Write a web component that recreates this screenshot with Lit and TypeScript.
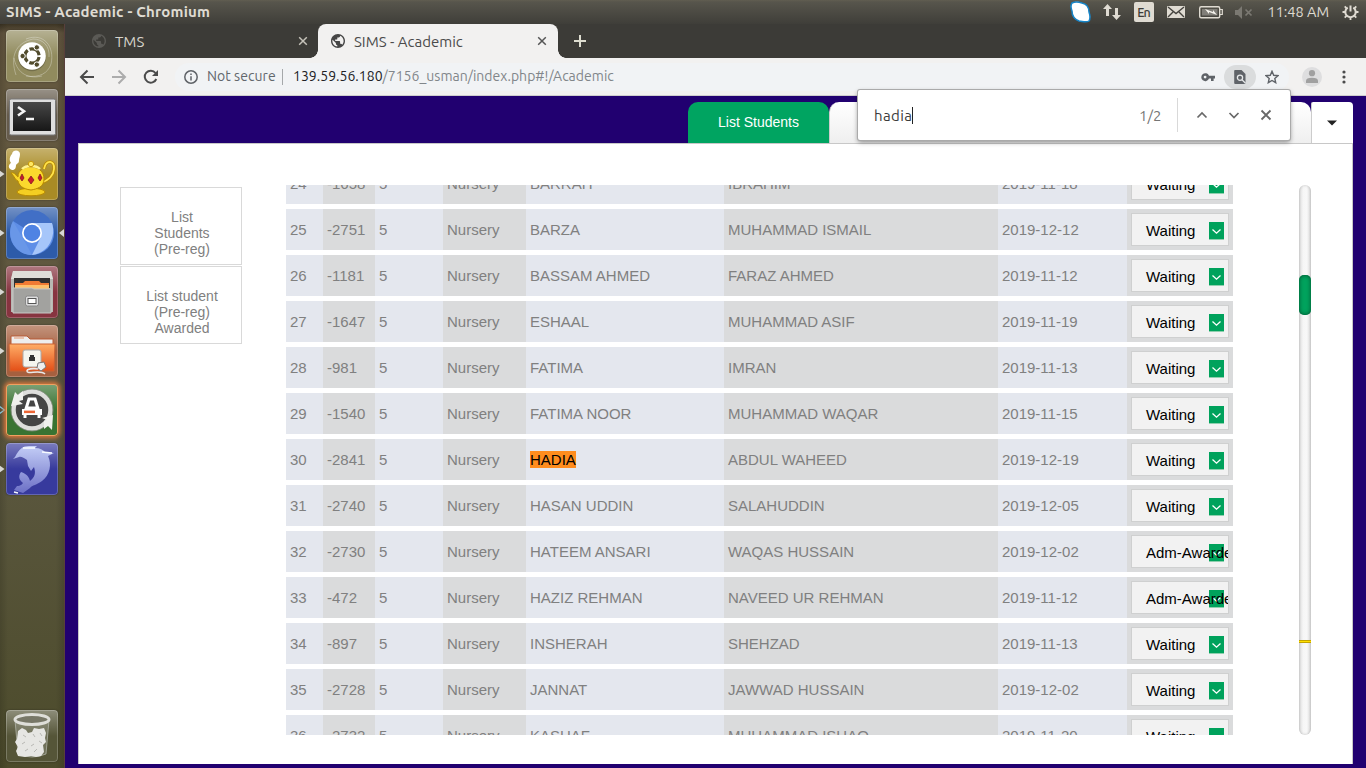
import { LitElement, html, css, svg } from "lit";
import { customElement, property } from "lit/decorators.js";

type Student = [number, string, string, string, string, string];

const students: Student[] = [
  [24, "-1658", "BARRAH", "IBRAHIM", "2019-11-18", "Waiting"],
  [25, "-2751", "BARZA", "MUHAMMAD ISMAIL", "2019-12-12", "Waiting"],
  [26, "-1181", "BASSAM AHMED", "FARAZ AHMED", "2019-11-12", "Waiting"],
  [27, "-1647", "ESHAAL", "MUHAMMAD ASIF", "2019-11-19", "Waiting"],
  [28, "-981", "FATIMA", "IMRAN", "2019-11-13", "Waiting"],
  [29, "-1540", "FATIMA NOOR", "MUHAMMAD WAQAR", "2019-11-15", "Waiting"],
  [30, "-2841", "HADIA", "ABDUL WAHEED", "2019-12-19", "Waiting"],
  [31, "-2740", "HASAN UDDIN", "SALAHUDDIN", "2019-12-05", "Waiting"],
  [32, "-2730", "HATEEM ANSARI", "WAQAS HUSSAIN", "2019-12-02", "Adm-Awarded"],
  [33, "-472", "HAZIZ REHMAN", "NAVEED UR REHMAN", "2019-11-12", "Adm-Awarded"],
  [34, "-897", "INSHERAH", "SHEHZAD", "2019-11-13", "Waiting"],
  [35, "-2728", "JANNAT", "JAWWAD HUSSAIN", "2019-12-02", "Waiting"],
  [36, "-2732", "KASHAF", "MUHAMMAD ISHAQ", "2019-11-20", "Waiting"],
];

const globe = svg`<path transform="scale(.7) translate(-2 -2)" fill="currentColor" d="M12 2C6.480 2 2 6.480 2 12s4.480 10 10 10 10-4.480 10-10S17.520 2 12 2zm-1 17.930c-3.950-.49-7-3.850-7-7.930 0-.62.08-1.210.21-1.790L9 15v1c0 1.100.9 2 2 2v1.930zm6.900-2.540c-.26-.81-1-1.390-1.900-1.390h-1v-3c0-.55-.45-1-1-1H8v-2h2c.55 0 1-.45 1-1V7h2c1.100 0 2-.9 2-2v-.41c2.930 1.190 5 4.060 5 7.410 0 2.080-.8 3.970-2.100 5.390z"/>`;

@customElement("launcher-bar")
export class LauncherBar extends LitElement {
  static styles = css`
    :host { display: flex; flex-direction: column; justify-content: space-between; box-sizing: border-box; width: 65px; height: 744px; padding: 6px 0;
      background: linear-gradient(90deg, #0002, transparent 8px, transparent 56px, #0002), linear-gradient(#3d3524 0, #62553f 9px, #64583f 60px, #5c5840 55%, #4c4b2b 100%); border-right: 1px solid #59403c; }
    .group { display: flex; flex-direction: column; gap: 7px; }
    .item { display: grid; grid-template-columns: 6px 52px 6px; align-items: center; height: 52px; }
    .tile { width: 52px; height: 52px; border-radius: 4px; overflow: hidden; box-shadow: inset 0 0 0 1px #ffffff38, 0 0 2px #0006; background: linear-gradient(#fff5, #fff0 50%), var(--tile); }
    .glow { box-shadow: 0 0 4px 2px #d9763b, inset 0 0 0 1px #f0a060; }
    svg { display: block; }
  `;

  private item(color: string, art: unknown, left = "", right = false) {
    return html`<div class="item">
      <svg width="6" height="12" viewBox="0 0 6 12">${left ? svg`<path d="M-1 2 4.500 6-1 10Z" fill=${left === "open" ? "none" : "#d8d8d4"} stroke=${left === "open" ? "#7cd0f0" : "none"} stroke-width="1.200"/>` : ""}</svg>
      <div class="tile ${left === "open" ? "glow" : ""}" style="--tile:${color}"><svg width="52" height="52" viewBox="0 0 52 52">${art}</svg></div>
      <svg width="6" height="12" viewBox="0 0 6 12">${right ? svg`<path d="M6 2 1 6 6 10Z" fill="#d8d8d4"/>` : ""}</svg>
    </div>`;
  }

  render() {
    return html`<div class="group">
      ${this.item("#918b5e", svg`
        <g fill="none" stroke="#fff" stroke-opacity=".3"><path d="M10 45C4 27 9 13 27 9c10 0 17 7 16 18M20 9c18-7 29 8 25 25-3 9-11 14-25 12M8 28c2 12 11 22 28 18"/></g>
        <circle cx="26" cy="27" r="14.200" fill="#0003"/><circle cx="26" cy="26" r="13.800" fill="#fff"/>
        <circle cx="26" cy="26" r="7.100" fill="none" stroke="#514b2c" stroke-width="3.200" stroke-dasharray="12.800 2.070" stroke-dashoffset="-1"/>
        <g fill="#514b2c" stroke="#fff"><circle cx="16.600" cy="26" r="2.700"/><circle cx="30.800" cy="17.400" r="2.700"/><circle cx="30.800" cy="34.600" r="2.700"/></g>`)}
      ${this.item("#655b4c", svg`
        <defs><linearGradient id="term" x2="0" y2="1"><stop stop-color="#474747"/><stop offset="1" stop-color="#171717"/></linearGradient></defs>
        <rect x="3.500" y="10" width="46" height="36" rx="1.500" fill="#dedede" stroke="#777"/>
        <rect x="7" y="13" width="38" height="29" fill="url(#term)"/>
        <path d="m12 18 6 4.300-6 4.200M20 30h8" fill="none" stroke="#f5f5f5" stroke-width="2.600"/>`)}
      ${this.item("#a98b25", svg`
        <ellipse cx="25" cy="44" rx="14" ry="3.800" fill="#f4ce22" stroke="#b98a00"/>
        <path d="M38 21c2-10 11-9 10 0-.5 7-5 11-13 14" fill="none" stroke="#b98a00" stroke-width="3.300"/><path d="M38 21c2-10 11-9 10 0-.5 7-5 11-13 14" fill="none" stroke="#ffe34b" stroke-width="1.800"/>
        <path d="M5 25c4-1 5 3 7 4 0-7 6-10 13-10s13 4 13 12-7 10-13 11c-9-1-12-5-13-9C9 32 9 29 5 25Z" fill="#fbd92d" stroke="#b98a00"/>
        <path d="M16 21c4-4 14-4 18 0" fill="none" stroke="#fff28d" stroke-width="2.400"/><circle cx="25" cy="16" r="2.700" fill="#ffe862" stroke="#c99a0a"/>
        <g fill="#c91d2c" stroke="#791423" stroke-width=".7"><path d="m16 26 2 4-2 3-2-3ZM25 28l3 4-3 4-3-4ZM34 26l2 4-2 3-2-3Z"/></g>
        <path d="M6 22c-5-2-3-6-1-7-3-4 0-8 1-9 1-5 8-4 8 0 0 3-1 4-1 6 0 4-2 3-3 5 0 3-1 5-4 5Z" fill="#fff"/>`, "solid")}
      ${this.item("#2d5ba9", svg`
        <circle cx="26" cy="26" r="22" fill="#5e8ee7"/><path d="M26 26 7 14A22 22 0 0 1 46 16Z" fill="#416fc6"/>
        <path d="M26 16h20c4 12-2 30-20 32l9-18Z" fill="#a6c6fa"/><path d="m7 14 12 21 7 13C9 48-1 29 7 14Z" fill="#6997e8"/>
        <circle cx="26" cy="26" r="10" fill="#fff"/><circle cx="26" cy="26" r="8.300" fill="#4f83e3"/>`, "solid", true)}
      ${this.item("#873440", svg`
        <path d="M7 5h38l2 8v33H5V13Z" fill="#b8b8b3"/><path d="M7 5h38l2 8H5Z" fill="#deded9"/>
        <rect x="8" y="12" width="36" height="10" fill="#303030"/><path d="M9 17h8l2-2h14l2 2h8v5H9Z" fill="#f07b34"/><path d="M9 19h34v4H9Z" fill="#ffc16b"/>
        <path d="M8 22h18l2 1h17v24H7V22Z" fill="#a2a29f" stroke="#c8c8c5"/><rect x="19.500" y="30" width="13" height="10" rx="2" fill="#ddd" stroke="#888"/><rect x="22" y="32.500" width="8" height="5" fill="#fff" stroke="#555"/>`, "solid")}
      ${this.item("#a6603f", svg`
        <defs><linearGradient id="fold" x2="0" y2="1"><stop stop-color="#ffad67"/><stop offset="1" stop-color="#e34f17"/></linearGradient></defs>
        <path d="M5 11h16l3 3h23v28H5Z" fill="#eee" stroke="#b95b34"/><path d="M8 13h10" stroke="#e5956e"/><path d="M3 19h46l-1 27H4Z" fill="url(#fold)" stroke="#cc6233"/>
        <rect x="17" y="25" width="18" height="17" rx="2" fill="#f5f5ee" stroke="#aaa"/><path d="M23 36h6v-4h-1v-2h-4v2h-1Z" fill="#333"/>
        <path d="m32 38 6-1 2 5-5 4-4-3Z" fill="#eee" stroke="#777"/><path d="M32 44c-5-1-11 0-11 2 0 4 13-2 18 3" fill="none" stroke="#e9e9e9" stroke-width="1.600"/>`, "solid")}
      ${this.item("#397332", svg`
        <circle cx="26" cy="26" r="18.500" fill="#454545" stroke="#dededc" stroke-width="4.500"/><circle cx="26" cy="26" r="21" fill="none" stroke="#8b8b87" stroke-width=".7"/>
        <path d="M5 22 9 8l3 3 5-4v9l-4 1 4 3ZM47 31l-1 15-4-4-4 3v-8l3-1-5-2Z" fill="#f0f0ed"/>
        <path d="M19 34v-6l4-13h6l4 13v6M20 24h12" fill="none" stroke="#fff" stroke-width="3"/><rect x="16" y="25" width="20" height="6" fill="#fff"/><rect x="18" y="26.600" width="11" height="2.500" fill="#ed6737"/>`, "open")}
      ${this.item("#373a9d", svg`
        <defs><linearGradient id="dol" x2="0" y2="1"><stop stop-color="#c3cdf6"/><stop offset="1" stop-color="#6c70c6"/></linearGradient></defs>
        <path d="M9 14C13 6 17 3 23 3h8l-2 2c5 0 8 2 10 4l9 1-6 3c4 8 2 19-6 25-5 4-10 4-12 7l-7 5-9-3 3-4c4 0 5-2 6-3-4-3-5-7-2-11 6 2 8 5 9 9 5-4 6-8 4-14l-3 4-3-5-1-6c-3-2-6-4-8-3l-6 2Z" fill="url(#dol)"/><path d="M17 5h12M8 49l4 1M36 9l10 1" stroke="#f7fbff" stroke-width="1.500"/>`, "solid")}
    </div>
    ${this.item("#555538", svg`
      <path d="m9 10 3 34q14 6 28 0l3-34" fill="#a7ab9f55" stroke="#c7c9c2" stroke-opacity=".6"/>
      <path d="m12 21 4-3 4 2 2 3 4-1 2-4 5 1 5-1 2 5-1 5 1 4-3 3 1 7-3 4-5 1-5-1-6 1-7-1-2-5 2-4-3-5 2-3Z" fill="#e6e6e3"/><path d="m17 25 3 2m7-3 2 3m5-4 2 3M16 34l3-2m6 4 3-2m5-3 3 2M19 41l3-2m6 3 3-3" fill="none" stroke="#b8b8b4"/>
      <ellipse cx="26" cy="9.500" rx="17" ry="5" fill="#777767" stroke="#deded9" stroke-width="3"/>`)}`;
  }
}

@customElement("student-table")
export class StudentTable extends LitElement {
  @property({ attribute: false }) rows: Student[] = [];
  static styles = css`
    :host { display: block; width: 947px; height: 550px; overflow: hidden; font: 15px/17px "Liberation Sans", Arial, sans-serif; color: #808080; }
    .rows { display: flex; flex-direction: column; gap: 5px; margin-top: -22px; }
    .row { display: grid; grid-template-columns: 37px 52px 68px 83px 198px 274px 129px 106px; height: 41px; }
    .row > div { display: flex; align-items: center; padding: 0 4px 1px; background: #e4e7ee; white-space: nowrap; }
    .row > div:nth-child(even) { background: #dadbdc; }
    .row > .status { padding: 0 4px; }
    .select { display: grid; grid-template-columns: 1fr 15px 4px; align-items: center; box-sizing: border-box; width: 98px; height: 33px; padding-left: 14px; border: 1px solid #cfd0d0; background: #f2f2f2; color: #000; overflow: hidden; }
    .label { z-index: 1; width: 0; white-space: nowrap; padding-top: 2px; }
    .arrow { display: block; margin-top: 3px; }
    mark { background: #ff8d1e; color: #000; }
  `;
  render() {
    return html`<div class="rows">${this.rows.map(
      ([n, id, name, father, date, status]) => html`<div class="row">
        <div>${n}</div><div>${id}</div><div>5</div><div>Nursery</div>
        <div>${name === "HADIA" ? html`<mark>${name}</mark>` : name}</div>
        <div>${father}</div><div>${date}</div>
        <div class="status"><div class="select"><span class="label">${status}</span>
          <svg class="arrow" width="15" height="18" viewBox="0 0 15 18"><path d="M0 0h15v17H0Z" fill="#00a25c"/><path d="M0 17h15v1H0Z" fill="#8fcfae"/><path d="m3.500 7.500 4 3.700 4-3.700" fill="none" stroke="#fff" stroke-width="1.300"/></svg>
        </div></div>
      </div>`
    )}</div>`;
  }
}

@customElement("app-root")
export class AppRoot extends LitElement {
  static styles = css`
    :host { display: block; position: relative; width: 1366px; height: 768px; overflow: hidden; font-family: Ubuntu, "Noto Sans", sans-serif; }
    svg { display: block; flex: none; }
    .system { display: flex; align-items: center; justify-content: space-between; height: 24px; box-sizing: border-box; padding: 0 7px 0 6px; background: linear-gradient(#615e51 0, #57554c 2px, #3f3e39 24px); color: #dfdbd2; }
    .title { font-size: 15px; font-weight: 700; letter-spacing: .2px; line-height: 18px; }
    .tray { display: flex; align-items: center; }
    .desktop { display: flex; height: 744px; }
    .browser { flex: 1; min-width: 0; }
    .tabs { display: flex; height: 34px; background: #3c3b37; font-size: 15px; }
    .tab { display: flex; align-items: center; box-sizing: border-box; height: 34px; }
    .tab span { flex: 1; white-space: nowrap; }
    .idle { width: 253px; padding: 0 10px 0 27px; color: #d7d4cb; }
    .idle .world { color: #5b5a56; margin-right: 9px; }
    .active { position: relative; width: 240px; padding: 0 11px 0 13px; background: #f2f1f0; border-radius: 8px 8px 0 0; color: #4b4b4b; }
    .active::before, .active::after { content: ""; position: absolute; bottom: 0; width: 8px; height: 8px; }
    .active::before { left: -8px; background: radial-gradient(circle at 0 0, #3c3b37 7.5px, #f2f1f0 8px); }
    .active::after { right: -8px; background: radial-gradient(circle at 100% 0, #3c3b37 7.5px, #f2f1f0 8px); }
    .active .world { color: #464646; margin-right: 9px; }
    .plus { align-self: center; margin-left: 15px; }
    .toolbar { display: flex; align-items: center; box-sizing: border-box; height: 38px; padding: 0 14px; border-bottom: 1px solid #cfcecd; background: #f2f1f0; }
    .nav { display: flex; gap: 16px; width: 96px; }
    .omnibox { display: flex; align-items: center; width: 1114px; height: 28px; border-radius: 14px; box-sizing: border-box; padding: 0 10px 0 9px; background: #f1f3f5; color: #81868a; font-size: 14px; }
    .secure { margin-left: 9px; width: 75px; padding-bottom: 2px; color: #62676c; letter-spacing: .05px; white-space: nowrap; }
    .sep { width: 1px; height: 16px; background: #a5a8aa; margin-right: 10px; }
    .url { flex: 1; padding-bottom: 2px; letter-spacing: .02px; white-space: nowrap; }
    .host { color: #202124; }
    .find-badge { display: grid; place-items: center; width: 32px; height: 24px; border-radius: 12px; background: #dadcdd; margin: 0 9px; }
    .person { margin: 0 20px 0 13px; }
    .page { display: flex; flex-direction: column; box-sizing: border-box; height: 672px; padding: 6px 13px 4px; background: #210070; font-family: "Liberation Sans", Arial, sans-serif; }
    .menu { display: flex; justify-content: flex-end; height: 41px; }
    .menu > div { display: grid; place-items: center; box-sizing: border-box; }
    .menu .current { width: 141px; padding-bottom: 2px; border-radius: 10px 10px 0 0; background: #00a461; color: #fff; font-size: 14px; }
    .menu .other { width: 482px; border-radius: 10px 10px 0 0; background: linear-gradient(#fff, #efefef); border-left: 1px solid #ccc; }
    .menu .more { width: 42px; padding-right: 2px; border-left: 1px solid #ccc; border-radius: 2px 4px 0 0; background: #fff; }
    .panel { flex: 1; display: flex; box-sizing: border-box; border: 1px solid #c8c8c8; border-bottom: 0; background: #fff; padding: 41px 41px 0; }
    .side { display: flex; flex-direction: column; gap: 1px; width: 122px; margin: 2px 44px 0 0; }
    .link { box-sizing: border-box; height: 78px; border: 1px solid #d9d9d9; padding: 21px 19px 0 21px; text-align: center; font-size: 14px; line-height: 16px; color: #808080; }
    .track { position: relative; width: 12px; height: 550px; margin-left: 66px; border-radius: 6px; background: linear-gradient(90deg, #ddd, #f6f6f6 35%, #f8f8f8 65%, #d9d9d9); box-shadow: inset 0 0 3px #0003; }
    .thumb { position: absolute; top: 90px; width: 12px; height: 40px; border-radius: 5px; background: #00a25d; box-shadow: inset 0 0 4px #004c2c; }
    .hit { position: absolute; top: 455px; width: 12px; height: 3px; box-sizing: border-box; background: #ffe000; border: solid #c4a400; border-width: 1px 0; }
    .find { position: absolute; left: 858px; top: 90px; width: 432px; height: 50px; display: flex; align-items: center; box-sizing: border-box; padding: 0 18px 0 16px; background: #fff; border-radius: 2px; box-shadow: 0 0 0 1px #aaa, 0 2px 5px #0007; font-size: 15px; color: #3c3c3c; }
    .query { border-right: 1px solid #222; line-height: 17px; letter-spacing: .4px; }
    .count { margin-left: auto; color: #757575; width: 38px; }
    .find .line { width: 1px; height: 34px; background: #d9d9d9; margin-right: 18px; }
    .find-icons { display: flex; gap: 20px; }
  `;

  private close(color: string) {
    return html`<svg width="10" height="10" viewBox="0 0 10 10"><path d="m1.200 1.200 7.600 7.600m0-7.600L1.200 8.800" fill="none" stroke=${color} stroke-width="1.500"/></svg>`;
  }

  render() {
    return html`
      <div class="system"><div class="title">SIMS - Academic - Chromium</div>
        <div class="tray">
          <svg width="273" height="24" viewBox="1069 0 273 24">
            <path d="M1072 3c4-2 7-1 10 0 5 1 7 5 7 9 1 3 2 6 0 9-3 2-7 0-10 0-5-2-7-6-7-10-1-3-2-5 0-8Z" fill="#fff" stroke="#1684c7" stroke-width="1.500"/>
            <g fill="#dfdbd2"><path d="m1103 9 4.500-5 4.500 5h-3v7h-3V9ZM1112 15l4.500 5 4.500-5h-3V8h-3v7Z"/><rect x="1134" y="2" width="20" height="20" rx="2"/><rect x="1167" y="6" width="18" height="12" rx="1"/></g>
            <text x="1144" y="17" text-anchor="middle" font-family="Ubuntu, Noto Sans" font-size="12.500" font-weight="500" fill="#3c3b37" textLength="13.500">En</text>
            <path d="m1168 7 8 6.500 8-6.500m-16 10 5-5m11 5-5-5" fill="none" stroke="#45433e" stroke-width="1.400"/>
            <rect x="1199.700" y="6.700" width="20" height="11" rx="1.500" fill="none" stroke="#dfdbd2" stroke-width="1.400"/><path d="M1220 9.500h2.300v5h-2.300" fill="none" stroke="#dfdbd2" stroke-width="1.200"/><rect x="1202" y="9" width="15.500" height="6.500" fill="#807e78"/><path d="m1205 9 8 3v-2l4 5-8-3v2Z" fill="#f4f2ec"/>
            <path d="M1235 10h3l4-4v13l-4-4h-3Z" fill="#7b7972"/><path d="m1245.500 9.500 6 6m0-6-6 6" stroke="#7b7972" stroke-width="1.700"/>
            <text x="1267.500" y="17" font-family="Ubuntu, Noto Sans" font-size="14.500" fill="#dfdbd2" textLength="61.500">11:48 AM</text>
          </svg>
          <svg width="17" height="18" viewBox="0 0 17 18"><g fill="none" stroke="#dfdbd2"><path d="M5.700 4.600a5.200 5.200 0 1 0 5.600 0" stroke-width="2"/><path d="M8.500 2.500v6" stroke-width="2"/><path d="M.5 9h3m10 0h3M8.500 14v3M2.700 3.300l2 2m9.600-2-2 2M2.700 14.700l2-2m9.600 2-2-2" stroke-width="1.800"/></g></svg>
        </div>
      </div>
      <div class="desktop"><launcher-bar></launcher-bar>
        <div class="browser">
          <div class="tabs">
            <div class="tab idle"><svg class="world" width="14" height="14">${globe}</svg><span>TMS</span>${this.close("#c6c3ba")}</div>
            <div class="tab active"><svg class="world" width="14" height="14">${globe}</svg><span>SIMS - Academic</span>${this.close("#555")}</div>
            <svg class="plus" width="14" height="14"><path d="M7 1v12M1 7h12" stroke="#deddd0" stroke-width="2"/></svg>
          </div>
          <div class="toolbar">
            <div class="nav">
              <svg width="16" height="16"><path d="M15 8H2m6.500-6.500L2 8l6.500 6.500" fill="none" stroke="#4b4b4b" stroke-width="2"/></svg>
              <svg width="16" height="16"><path d="M1 8h13M7.500 1.500 14 8l-6.500 6.500" fill="none" stroke="#acacac" stroke-width="2"/></svg>
              <svg width="16" height="16"><path d="M13.300 10a6 6 0 1 1-.8-6" fill="none" stroke="#4b4b4b" stroke-width="2"/><path d="M15 1v6H9Z" fill="#4b4b4b"/></svg>
            </div>
            <div class="omnibox">
              <svg width="14" height="14"><circle cx="7" cy="7" r="6.200" fill="none" stroke="#5f6368" stroke-width="1.500"/><path d="M7 6.200v4.300M7 3.400V5" stroke="#5f6368" stroke-width="1.500"/></svg>
              <div class="secure">Not secure</div><div class="sep"></div>
              <div class="url"><span class="host">139.59.56.180</span>/7156_usman/index.php#!/Academic</div>
              <svg width="14" height="14"><path d="M8 5.700A4 4 0 1 0 8 8.600h2v2.500h2.600V8.600H14V5.700Z" fill="#5f6368"/><circle cx="4.100" cy="7.100" r="1.400" fill="#f1f3f5"/></svg>
              <div class="find-badge"><svg width="12" height="14"><path d="M1 0h6.500L11.500 4v9q0 1-1 1H1.300Q.2 14 .2 13V1Q.2 0 1 0Z" fill="#5f6368"/><circle cx="6" cy="7.700" r="2.600" fill="none" stroke="#e6e8e9" stroke-width="1.300"/><path d="m8 9.700 3.500 3.500" stroke="#e6e8e9" stroke-width="1.300"/></svg></div>
              <svg width="14" height="14"><path d="m7 1.300 1.700 4 4.300.4-3.200 2.800.9 4.200L7 10.500l-3.700 2.200.9-4.200L1 5.700l4.300-.4Z" fill="none" stroke="#5f6368" stroke-width="1.400"/></svg>
            </div>
            <svg class="person" width="20" height="20"><circle cx="10" cy="10" r="10" fill="#dededf"/><g fill="#a0a0a0"><circle cx="10" cy="6.200" r="3.100"/><path d="M4 16v-2.200q0-3 6-3t6 3V16Z"/></g></svg>
            <svg width="4" height="14"><g fill="#4b4b4b"><circle cx="2" cy="2" r="1.600"/><circle cx="2" cy="7" r="1.600"/><circle cx="2" cy="12" r="1.600"/></g></svg>
          </div>
          <div class="page">
            <div class="menu"><div class="current">List Students</div><div class="other"></div><div class="more"><svg width="10" height="6"><path d="M0 .5h10L5 5.500Z" fill="#222"/></svg></div></div>
            <div class="panel">
              <div class="side"><div class="link">List Students (Pre-reg)</div><div class="link">List student (Pre-reg) Awarded</div></div>
              <student-table .rows=${students}></student-table>
              <div class="track"><div class="thumb"></div><div class="hit"></div></div>
            </div>
          </div>
        </div>
      </div>
      <div class="find"><span class="query">hadia</span><span class="count">1/2</span><div class="line"></div>
        <div class="find-icons">
          <svg width="12" height="12"><path d="m1.500 8.500 4.500-4.500 4.500 4.500" fill="none" stroke="#686868" stroke-width="1.700"/></svg>
          <svg width="12" height="12"><path d="m1.500 4 4.500 4.500L10.500 4" fill="none" stroke="#686868" stroke-width="1.700"/></svg>
          <svg width="12" height="12"><path d="m1.500 1.500 9 9m0-9-9 9" fill="none" stroke="#686868" stroke-width="1.800"/></svg>
        </div>
      </div>`;
  }
}
